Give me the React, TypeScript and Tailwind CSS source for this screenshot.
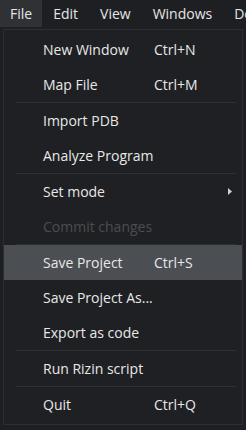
import React from "react"

type Item =
  | { kind: "item"; label: string; shortcut?: string; disabled?: boolean; active?: boolean; submenu?: boolean }
  | { kind: "sep" }

const items: Item[] = [
  { kind: "item", label: "New Window", shortcut: "Ctrl+N" },
  { kind: "item", label: "Map File", shortcut: "Ctrl+M" },
  { kind: "sep" },
  { kind: "item", label: "Import PDB" },
  { kind: "item", label: "Analyze Program" },
  { kind: "sep" },
  { kind: "item", label: "Set mode", submenu: true },
  { kind: "item", label: "Commit changes", disabled: true },
  { kind: "sep" },
  { kind: "item", label: "Save Project", shortcut: "Ctrl+S", active: true },
  { kind: "item", label: "Save Project As..." },
  { kind: "item", label: "Export as code" },
  { kind: "sep" },
  { kind: "item", label: "Run Rizin script" },
  { kind: "sep" },
  { kind: "item", label: "Quit", shortcut: "Ctrl+Q" },
]

const menus = ["File", "Edit", "View", "Windows", "Debug"]

export default function App() {
  return (
    <div
      className="relative w-[246px] h-[430px] overflow-hidden bg-[#1e1f22] text-[#e6e6e6] text-[14px]"
      style={{ fontFamily: '"Open Sans", "Noto Sans", sans-serif' }}
    >
      {/* menu bar */}
      <div className="flex h-[27px] items-center whitespace-nowrap">
        {menus.map((m, i) => (
          <div
            key={m}
            className={
              i === 0
                ? "h-full flex items-center px-[10px] bg-[#2f3135]"
                : "h-full flex items-center px-[11px]"
            }
          >
            {m}
          </div>
        ))}
      </div>

      {/* dropdown */}
      <div className="absolute left-[3px] top-[29px] w-[240px] border border-[#2c2e31] bg-[#1f2023] pt-[2px] pb-[2px]">
        {items.map((it, i) =>
          it.kind === "sep" ? (
            <div key={i} className="h-px ml-[12px] mr-[6px] bg-[#2e3033]" />
          ) : (
            <div
              key={i}
              className={
                "relative flex h-[35px] items-center pl-[39px] " +
                (it.active ? "bg-[#4b4e53] " : "") +
                (it.disabled ? "text-[#4b4d51]" : "text-[#e8e8e8]")
              }
            >
              <span className="w-[111px] whitespace-nowrap">{it.label}</span>
              {it.shortcut && <span className="whitespace-nowrap">{it.shortcut}</span>}
              {it.submenu && (
                <svg className="absolute right-[10px] top-[14px]" width="4" height="7" viewBox="0 0 4 7">
                  <path d="M0 0 L4 3.5 L0 7 Z" fill="#d0d0d0" />
                </svg>
              )}
            </div>
          )
        )}
      </div>
    </div>
  )
}
